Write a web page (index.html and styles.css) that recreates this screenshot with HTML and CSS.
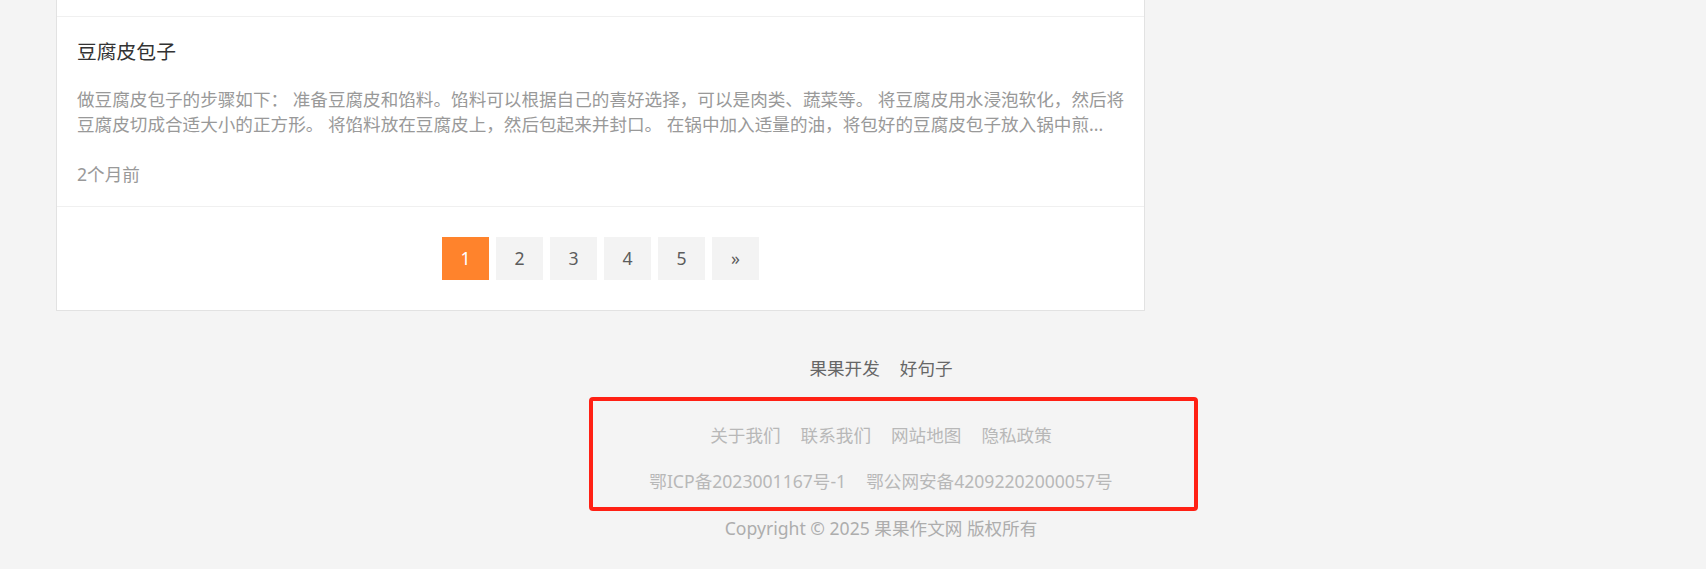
FILE: index.html
```html
<!DOCTYPE html>
<html lang="zh-CN">
<head>
    <meta charset="UTF-8">
    <title>果果作文网</title>
    <meta name="viewport" content="width=device-width, initial-scale=1">
    <link rel="stylesheet" href="styles.css">
</head>
<body>
    <div class="list">
        <!-- 上一篇文章的底部 -->
        <div class="item-stub"></div>
        <div class="item">
            <h3 class="item-title">豆腐皮包子</h3>
            <p class="item-desc">做豆腐皮包子的步骤如下： 准备豆腐皮和馅料。馅料可以根据自己的喜好选择，可以是肉类、蔬菜等。 将豆腐皮用水浸泡软化，然后将豆腐皮切成合适大小的正方形。 将馅料放在豆腐皮上，然后包起来并封口。 在锅中加入适量的油，将包好的豆腐皮包子放入锅中煎...</p>
            <div class="item-time">2个月前</div>
        </div>
        <div class="pager">
            <a class="page active">1</a>
            <a class="page">2</a>
            <a class="page">3</a>
            <a class="page">4</a>
            <a class="page">5</a>
            <a class="page">»</a>
        </div>
    </div>

    <div class="footer">
        <div class="friend">
            <a>果果开发</a>
            <a>好句子</a>
        </div>
        <div class="links">
            <a>关于我们</a>
            <a>联系我们</a>
            <a>网站地图</a>
            <a>隐私政策</a>
        </div>
        <div class="links beian">
            <a>鄂ICP备2023001167号-1</a>
            <a>鄂公网安备42092202000057号</a>
        </div>
        <div class="copyright">Copyright © 2025 果果作文网 版权所有</div>
        <!-- 截图上的红框标注 -->
        <div class="mark"></div>
    </div>
</body>
</html>
```

FILE: styles.css
```css
body {
    margin: 0;
    background: #f4f4f4;
    font-family: "Noto Sans", "Noto Sans CJK SC", sans-serif;
    font-size: 17.6px;
    line-height: 25px;
}
a {
    text-decoration: none;
    cursor: pointer;
}
.list {
    margin-left: 56px;
    width: 1089px;
    box-sizing: border-box;
    background: #fff;
    border: 1px solid #e2e2e2;
    border-top: none;
}
.item-stub {
    height: 16px;
    border-bottom: 1px solid #f0f0f0;
}
.item {
    padding: 22px 17px 19px 20px;
    border-bottom: 1px solid #f0f0f0;
}
.item-title {
    margin: 0 0 22px 0;
    font-size: 19.8px;
    line-height: 26px;
    font-weight: normal;
    color: #333;
}
.item-desc {
    margin: 0 0 25px 0;
    color: #999;
}
.item-time {
    color: #999;
}
.pager {
    display: flex;
    justify-content: center;
    gap: 7px;
    padding: 30px 0;
}
.page {
    width: 47px;
    height: 43px;
    display: flex;
    align-items: center;
    justify-content: center;
    background: #f3f3f3;
    color: #5c5c5c;
}
.page.active {
    background: #ff832c;
    color: #fff;
}
.footer {
    position: relative;
    padding: 45px 0 20px 56px;
    text-align: center;
}
.friend,
.links {
    display: flex;
    justify-content: center;
    gap: 20px;
}
.friend a {
    color: #666;
}
.links {
    margin-top: 42px;
}
.links a {
    color: #b8b8b8;
}
.links.beian {
    margin-top: 21px;
}
.copyright {
    margin-top: 22px;
    color: #adadad;
}
.mark {
    position: absolute;
    left: 589px;
    top: 86px;
    width: 609px;
    height: 114px;
    box-sizing: border-box;
    border: 4px solid #ff2014;
    border-radius: 4px;
}
```
